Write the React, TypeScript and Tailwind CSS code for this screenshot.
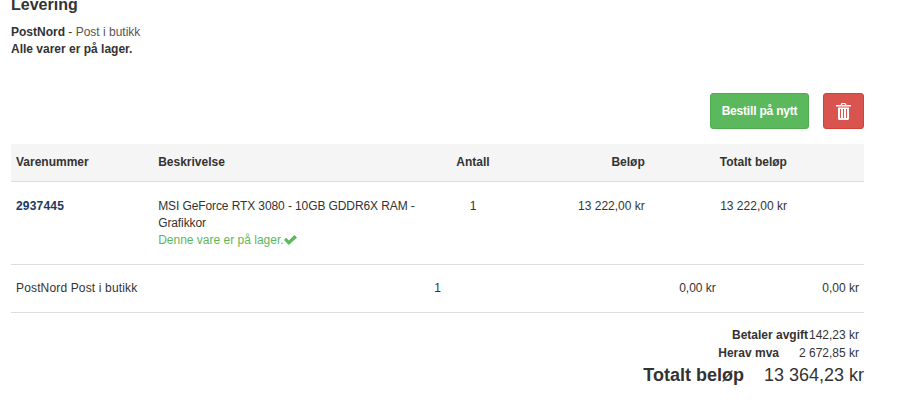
const font = { fontFamily: '"Liberation Sans", Arial, sans-serif' }

function TrashIcon() {
  return (
    <svg className="h-[17px] w-[15px]" viewBox="0 0 15 17" fill="currentColor">
      <path fillRule="evenodd" d="M4.500 2 5.500 0h4l1 2H15v1.500H0V2zM6 2h3l-.5-1h-2z" />
      <path
        fillRule="evenodd"
        d="M2 4.500h11v11c0 .8-.7 1.500-1.500 1.500h-8C2.700 17 2 16.300 2 15.500zM4 6v9h1V6zM7 6v9h1V6zM10 6v9h1V6z"
      />
    </svg>
  )
}

function CheckIcon() {
  return (
    <svg className="inline-block h-[10px] w-[13px] align-[-1px]" viewBox="0 0 13 10" fill="#5cb85c">
      <path d="M0 5 2.200 2.800 4.800 5.400 10.500 0 13 2.400 4.800 10z" />
    </svg>
  )
}

export default function App() {
  return (
    <div className="h-[412px] w-[910px] overflow-hidden bg-white px-[11px] text-[12px] leading-[17px] text-[#333]" style={font}>
      <div className="w-[853px]">
        <h2 className="-mt-[4px] text-[16px] font-bold leading-[18px]">Levering</h2>
        <p className="mt-[10px]">
          <b>PostNord</b> - <span className="text-[#555]">Post i butikk</span>
        </p>
        <p className="font-bold">Alle varer er på lager.</p>

        <div className="mt-[35px] flex justify-end gap-[14px]">
          <button type="button" className="h-[36px] w-[99px] rounded-[3px] border border-[#4cae4c] bg-[#5cb85c] text-[12px] font-bold tracking-[-0.2px] text-white">
            Bestill på nytt
          </button>
          <button type="button" className="flex h-[36px] w-[41px] items-center justify-center rounded-[3px] border border-[#d43f3a] bg-[#d9534f] text-white">
            <TrashIcon />
          </button>
        </div>

        <div className="mt-[15px] grid h-[38px] grid-cols-12 items-center border-b border-[#ddd] bg-[#f5f5f5] font-bold">
          <div className="col-span-2 px-[5px]">Varenummer</div>
          <div className="col-span-4 px-[5px]">Beskrivelse</div>
          <div className="col-span-1 px-[5px] text-center">Antall</div>
          <div className="col-span-2 pl-[5px] pr-[6px] text-right">Beløp</div>
          <div className="col-span-2 pl-[5px] pr-[6px] text-right">Totalt beløp</div>
        </div>

        <div className="grid h-[83px] grid-cols-12 border-b border-[#ddd] pt-[16px]">
          <div className="col-span-2 px-[5px] font-bold tracking-[0.2px] text-[#1a3a5f]">2937445</div>
          <div className="col-span-4 px-[5px]">
            <span className="tracking-[-0.1px]">MSI GeForce RTX 3080 - 10GB GDDR6X RAM - Grafikkor</span>
            <div className="text-[#5cb85c]">
              Denne vare er på lager.
              <CheckIcon />
            </div>
          </div>
          <div className="col-span-1 px-[5px] text-center">1</div>
          <div className="col-span-2 pl-[5px] pr-[6px] text-right">13 222,00 kr</div>
          <div className="col-span-2 pl-[5px] pr-[6px] text-right">13 222,00 kr</div>
        </div>

        <div className="grid h-[48px] grid-cols-12 items-center border-b border-[#ddd]">
          <div className="col-span-4 px-[5px] tracking-[0.15px]">PostNord Post i butikk</div>
          <div className="col-span-4 px-[5px] text-center">1</div>
          <div className="col-span-2 pl-[5px] pr-[6px] text-right">0,00 kr</div>
          <div className="col-span-2 px-[5px] text-right">0,00 kr</div>
        </div>

        <div className="mt-[14px] flex justify-end pr-[5px]">
          <b>Betaler avgift</b>
          <span className="w-[51px] text-right">142,23 kr</span>
        </div>
        <div className="mt-px flex justify-end pr-[5px]">
          <b>Herav mva</b>
          <span className="w-[80px] text-right">2 672,85 kr</span>
        </div>
        <div className="mt-[2px] flex justify-end text-[18px] leading-[22px]">
          <b>Totalt beløp</b>
          <span className="w-[120px] text-right">13 364,23 kr</span>
        </div>
      </div>
    </div>
  )
}
